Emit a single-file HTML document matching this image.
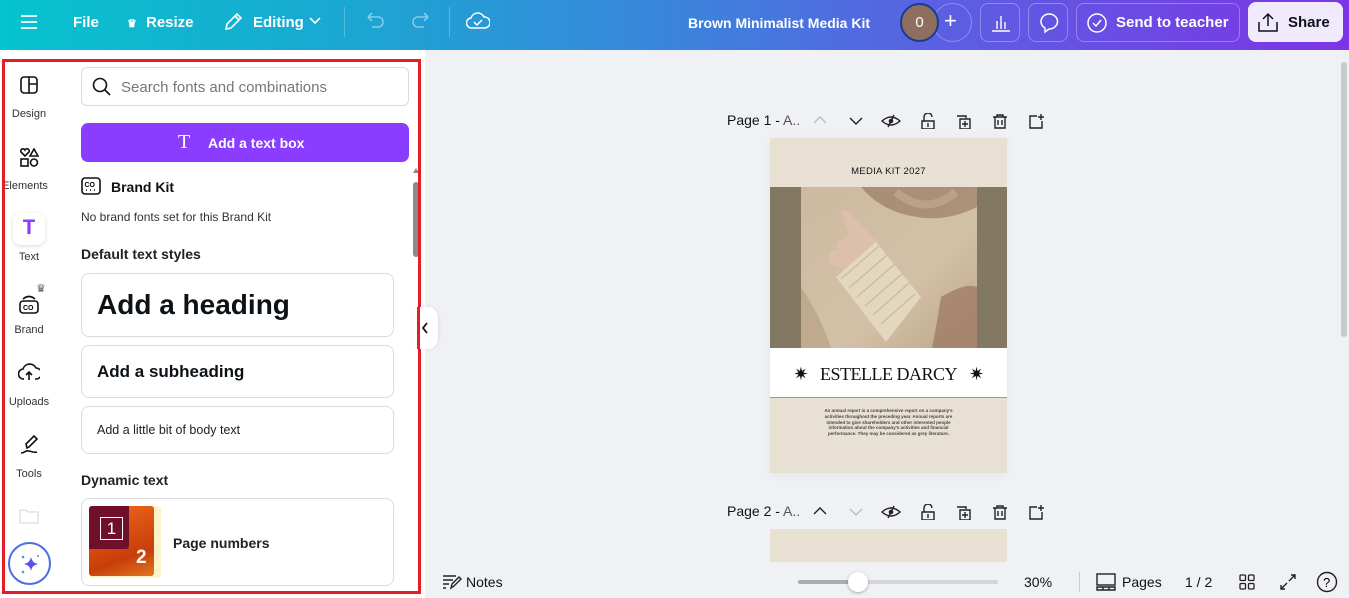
<!DOCTYPE html>
<html><head><meta charset="utf-8">
<style>
*{box-sizing:border-box;margin:0;padding:0}
body{width:1349px;height:598px;overflow:hidden;font-family:"Liberation Sans",sans-serif;background:#eff1f5;position:relative;color:#0d1216}
.top{position:absolute;left:0;top:0;width:1349px;height:50px;background:linear-gradient(90deg,#06c3cd 0%,#1aa8d2 25%,#3b84dc 50%,#5b5fe2 70%,#7d34e6 100%);color:#fff}
.top .t{position:absolute;top:14px;font-size:15px;font-weight:bold}
.sep{position:absolute;top:7px;width:1px;height:30px;background:rgba(255,255,255,.25)}
.tb{position:absolute;top:3px;height:39px;border:1px solid rgba(255,255,255,.3);border-radius:8px}
.panel{position:absolute;left:0;top:50px;width:425px;height:548px;background:#fff}
.red{position:absolute;left:2px;top:59px;width:419px;height:535px;border:3px solid #e81c25;pointer-events:none}
.nav{position:absolute;left:0;width:58px;text-align:center;font-size:11px;color:#333}
.card{position:absolute;left:81px;width:313px;border:1px solid #d9dbde;border-radius:8px;background:#fff}
.ic{stroke:#0d1216;fill:none;stroke-width:1.6}
.pgbar{position:absolute;left:727px;font-size:14px;color:#0d1216}
.pgbar span{color:#555}
</style></head><body>
<div class="top">
  <svg style="position:absolute;left:20px;top:14px" width="18" height="16"><path d="M1 2h16M1 8h16M1 14h16" stroke="#fff" stroke-width="1.8"/></svg>
  <div class="t" style="left:73px">File</div>
  <div class="t" style="left:127px;font-size:11px;top:17px">♛</div>
  <div class="t" style="left:146px">Resize</div>
  <svg style="position:absolute;left:223px;top:12px" width="20" height="20"><path d="M3 17l1-5L14 2l4 4L8 16zM12 4l4 4" stroke="#fff" stroke-width="1.6" fill="none"/></svg>
  <div class="t" style="left:253px">Editing</div>
  <svg style="position:absolute;left:309px;top:17px" width="12" height="8"><path d="M1 1l5 5 5-5" stroke="#fff" stroke-width="1.6" fill="none"/></svg>
  <div class="sep" style="left:344px"></div>
  <svg style="position:absolute;left:364px;top:12px" width="22" height="18"><path d="M4 5h10a5 5 0 010 10H8M4 5l4-4M4 5l4 4" stroke="rgba(255,255,255,.45)" stroke-width="1.6" fill="none"/></svg>
  <svg style="position:absolute;left:410px;top:12px" width="22" height="18"><path d="M18 5H8a5 5 0 000 10h6M18 5l-4-4M18 5l-4 4" stroke="rgba(255,255,255,.45)" stroke-width="1.6" fill="none"/></svg>
  <div class="sep" style="left:449px"></div>
  <svg style="position:absolute;left:466px;top:11px" width="24" height="20"><path d="M6 17a5 5 0 01-1-10 7 7 0 0113-1 5 5 0 011 11z M8 11l3 3 5-5" stroke="#fff" stroke-width="1.5" fill="none"/></svg>
  <div class="t" style="left:688px;font-size:14px;top:15px">Brown Minimalist Media Kit</div>
  <div style="position:absolute;left:933px;top:3px;width:39px;height:39px;border:1px solid rgba(255,255,255,.3);border-radius:50%"></div>
  <div style="position:absolute;left:900px;top:3px;width:39px;height:39px;border-radius:50%;background:#8e6f5f;border:2px solid #1b3c8c;text-align:center;line-height:35px;font-size:15px">0</div>
  <div class="t" style="left:944px;font-size:22px;top:8px;font-weight:normal">+</div>
  <div class="tb" style="left:980px;width:40px"><svg style="position:absolute;left:10px;top:9px" width="20" height="20"><path d="M1 18h18M6 16V8M10 16V3M14 16V9" stroke="#fff" stroke-width="1.4"/></svg></div>
  <div class="tb" style="left:1028px;width:40px"><svg style="position:absolute;left:9px;top:8px" width="22" height="22"><path d="M11 2a8.5 7.5 0 110 15l-4 3v-4a8 7.5 0 014-14z" stroke="#fff" stroke-width="1.5" fill="none"/></svg></div>
  <div class="tb" style="left:1076px;width:164px"><svg style="position:absolute;left:9px;top:8px" width="22" height="22"><circle cx="11" cy="11" r="9" stroke="#fff" stroke-width="1.5" fill="none"/><path d="M7 11l3 3 5-6" stroke="#fff" stroke-width="1.5" fill="none"/></svg><div class="t" style="left:39px;top:10px">Send to teacher</div></div>
  <div style="position:absolute;left:1248px;top:2px;width:95px;height:40px;border-radius:8px;background:#f1eafd;color:#0d1216"><svg style="position:absolute;left:10px;top:10px" width="20" height="20"><path d="M1 10v9h18v-9M10 14V2M5 7l5-5 5 5" stroke="#0d1216" stroke-width="1.5" fill="none"/></svg><div style="position:absolute;left:40px;top:12px;font-size:15px;font-weight:bold">Share</div></div>
</div>

<div class="panel"></div>
<!-- nav -->
<div class="nav" style="top:75px"><svg width="20" height="20"><rect x="2" y="2" width="16" height="16" rx="3" class="ic" stroke-width="1.4"/><path d="M10 2v16M10 9h8" class="ic" stroke-width="1.4"/></svg><div style="margin-top:10px">Design</div></div>
<div class="nav" style="top:148px"><svg width="20" height="20"><path d="M6 8l-4-4a2 2 0 014-2 2 2 0 014 2zM15 1l4 7h-8z" class="ic" stroke-width="1.3"/><rect x="2" y="11" width="7" height="7" class="ic" stroke-width="1.3"/><circle cx="15" cy="14.5" r="3.5" class="ic" stroke-width="1.3"/></svg><div style="margin-top:9px;margin-left:-8px">Elements</div></div>
<div style="position:absolute;left:13px;top:213px;width:32px;height:32px;border-radius:8px;background:#fff;box-shadow:0 1px 4px rgba(0,0,0,.15);color:#8b3dff;font-weight:bold;font-size:22px;text-align:center;line-height:32px;font-family:'Liberation Mono',monospace">T</div>
<div class="nav" style="top:251px">Text</div>
<div class="nav" style="top:285px"><span style="position:absolute;left:36px;top:-3px;font-size:11px;color:#555">♛</span><svg width="24" height="26" style="margin-top:8px"><rect x="3" y="8" width="18" height="12" rx="3" class="ic" stroke-width="1.3"/><text x="6" y="17" font-size="7" font-weight="bold" font-family="Liberation Sans">CO</text><path d="M6 6q6-5 12 0" class="ic" stroke-width="1.2"/></svg><div style="margin-top:2px">Brand</div></div>
<div class="nav" style="top:362px"><svg width="22" height="20"><path d="M6 17a5 5 0 01-1-10 7 7 0 0113-1 5 5 0 010 11h-1M11 18v-8M8 13l3-3 3 3" class="ic" stroke-width="1.3"/></svg><div style="margin-top:11px">Uploads</div></div>
<div class="nav" style="top:434px"><svg width="22" height="22"><path d="M9 14l-1-4 8-8 3 3-8 8zM3 19c4 0 4-3 8-2s6 2 8 1" class="ic" stroke-width="1.3"/></svg><div style="margin-top:9px">Tools</div></div>
<div class="nav" style="top:507px"><svg width="20" height="18"><path d="M1 3h6l2 2h10v11H1z" stroke="#ddd" fill="none" stroke-width="1.3"/></svg></div>
<div style="position:absolute;left:8px;top:542px;width:43px;height:43px;border-radius:50%;border:2px solid #4b6fe0;background:#fff"><svg style="position:absolute;left:9px;top:9px" width="22" height="22"><path d="M12 4q1 6 7 7q-6 1-7 7q-1-6-7-7q6-1 7-7z" fill="#5b4fe8"/><circle cx="4" cy="4" r="1.3" fill="#3aa0e0"/><circle cx="4" cy="19" r="1.3" fill="#3aa0e0"/><circle cx="19" cy="3" r="1" fill="#3aa0e0"/></svg></div>

<!-- panel content -->
<div class="card" style="top:67px;height:39px;width:328px;border-radius:6px"><svg style="position:absolute;left:10px;top:9px" width="20" height="20"><circle cx="8" cy="8" r="6.5" class="ic" stroke-width="1.8"/><path d="M13 13l5 5" class="ic" stroke-width="1.8"/></svg><div style="position:absolute;left:39px;top:11px;font-size:15px;color:#777">Search fonts and combinations</div></div>
<div style="position:absolute;left:81px;top:123px;width:328px;height:39px;border-radius:7px;background:#8b3dff;color:#fff"><div style="position:absolute;left:97px;top:8px;font-size:20px;font-family:'Liberation Serif',serif">T</div><div style="position:absolute;left:127px;top:12px;font-size:14px;font-weight:bold">Add a text box</div></div>
<svg style="position:absolute;left:81px;top:177px" width="20" height="19"><rect x="1" y="1" width="18" height="16" rx="3" class="ic" stroke-width="1.6"/><text x="3.5" y="10" font-size="7" font-weight="bold" font-family="Liberation Sans">CO</text><path d="M5 13h1M9 13h1M13 13h1" class="ic" stroke-width="1.8"/></svg>
<div style="position:absolute;left:111px;top:179px;font-size:14px;font-weight:bold">Brand Kit</div>
<div style="position:absolute;left:81px;top:210px;font-size:12px;color:#333">No brand fonts set for this Brand Kit</div>
<div style="position:absolute;left:81px;top:246px;font-size:14px;font-weight:bold;color:#222">Default text styles</div>
<div class="card" style="top:273px;height:64px"><div style="position:absolute;left:15px;top:15px;font-size:28px;font-weight:bold">Add a heading</div></div>
<div class="card" style="top:345px;height:53px"><div style="position:absolute;left:15px;top:16px;font-size:17px;font-weight:bold">Add a subheading</div></div>
<div class="card" style="top:406px;height:48px"><div style="position:absolute;left:15px;top:16px;font-size:12.5px;color:#222">Add a little bit of body text</div></div>
<div style="position:absolute;left:81px;top:472px;font-size:14px;font-weight:bold;color:#222">Dynamic text</div>
<div class="card" style="top:498px;height:88px">
  <div style="position:absolute;left:7px;top:7px;width:72px;height:72px;border-radius:3px;background:#fdf3c8"></div>
  <div style="position:absolute;left:7px;top:7px;width:65px;height:70px;border-radius:3px;background:linear-gradient(160deg,#f26a1b,#c73e0a 70%,#e0781e)"></div>
  <div style="position:absolute;left:7px;top:7px;width:40px;height:43px;background:#6f0f2a;border-radius:3px 0 3px 0"></div>
  <div style="position:absolute;left:18px;top:18px;width:23px;height:23px;border:1px solid #fff;color:#fff;font-size:17px;text-align:center;line-height:22px">1</div>
  <div style="position:absolute;left:54px;top:48px;color:#fff;font-size:19px;font-weight:bold">2</div>
  <div style="position:absolute;left:91px;top:36px;font-size:14px;font-weight:bold;color:#222">Page numbers</div>
</div>
<!-- scrollbar -->
<div style="position:absolute;left:413px;top:182px;width:6px;height:75px;border-radius:3px;background:#8a8a8a"></div>
<div style="position:absolute;left:413px;top:168px;width:0;height:0;border-left:3px solid transparent;border-right:3px solid transparent;border-bottom:5px solid #888"></div>
<div class="red"></div>
<div style="position:absolute;left:412px;top:307px;width:26px;height:42px;border-radius:0 10px 10px 0;background:#fff;box-shadow:1px 0 3px rgba(0,0,0,.08)"></div>
<div style="position:absolute;left:417px;top:307px;width:3px;height:42px;background:#e81c25"></div>
<svg style="position:absolute;left:421px;top:322px" width="8" height="12"><path d="M6 1L2 6l4 5" stroke="#111" stroke-width="1.8" fill="none"/></svg>

<!-- right scrollbar -->
<div style="position:absolute;left:1341px;top:62px;width:6px;height:275px;border-radius:3px;background:#c8cacd"></div>

<!-- page 1 bar -->
<div class="pgbar" style="top:112px">Page 1 - <span>A..</span></div>
<svg style="position:absolute;left:812px;top:113px" width="270" height="16">
 <path d="M2 10l6-6 6 6" stroke="#bbb" stroke-width="1.4" fill="none"/>
 <path d="M38 5l6 6 6-6" stroke="#222" stroke-width="1.4" fill="none"/>
 <path d="M70 8q9-8 18 0q-9 8-18 0zM82 2l-6 12" stroke="#222" stroke-width="1.4" fill="none"/><circle cx="79" cy="8" r="2.3" fill="#222"/>
 <path d="M110 8h12v8h-12zM112 8V4a4 4 0 018 0M116 10v4" stroke="#222" stroke-width="1.4" fill="none"/>
 <path d="M145 3h9v2M148 6h10v10h-10zM153 8v6M150 11h6" stroke="#222" stroke-width="1.4" fill="none"/>
 <path d="M181 4h14M185 4V2h6v2M183 4v11h10V4M186 7v5M190 7v5" stroke="#222" stroke-width="1.4" fill="none"/>
 <path d="M225 3h-7v12h12V8M226 4h6M229 1v6" stroke="#222" stroke-width="1.4" fill="none"/>
</svg>

<!-- page 1 -->
<div style="position:absolute;left:770px;top:138px;width:237px;height:335px;background:#e8e1d3;box-shadow:0 2px 10px rgba(0,0,0,.05);overflow:hidden">
  <div style="position:absolute;left:0;top:28px;width:237px;text-align:center;font-size:9.5px;letter-spacing:.3px">MEDIA KIT 2027</div>
  <div style="position:absolute;left:0;top:49px;width:237px;height:161px;background:#837862"></div>
  <svg style="position:absolute;left:31px;top:49px" width="176" height="161">
    <defs><linearGradient id="bg" x1="0" y1="0" x2="1" y2="1"><stop offset="0" stop-color="#cdb99f"/><stop offset=".6" stop-color="#d3c1a7"/><stop offset="1" stop-color="#bca68a"/></linearGradient></defs>
    <rect width="176" height="161" fill="url(#bg)"/>
    <path d="M60 0h116v20q-30 15-60 10q-35-5-56-30z" fill="#8a6a55" opacity=".55"/>
    <path d="M95 5q30 25 60 0" stroke="#b9a285" stroke-width="8" fill="none"/>
    <path d="M40 25q5-5 12 5l22 22q6 4 4 8l-20 15q-15 8-25 4q-8-3-5-12q2-5 10-4q-6-6 2-10l8-4z" fill="#dcc0ac"/>
    <path d="M35 90l40-35 45 55-35 45z" fill="#e3d7c0"/>
    <path d="M40 92l38-33M48 101l38-33M56 110l38-33M64 119l38-33M72 128l36-32M80 137l34-30" stroke="#c9b99e" stroke-width="1.2"/>
    <path d="M140 110q25-15 36-10v61h-45q5-25 9-51z" fill="#9b7560" opacity=".7"/>
    <path d="M0 100q20 30 30 61H0z" fill="#b39c80" opacity=".6"/>
  </svg>
  <div style="position:absolute;left:0;top:210px;width:237px;height:50px;background:#fff;border-bottom:1px solid #999"></div>
  <div style="position:absolute;left:0;top:226px;width:237px;text-align:center;font-family:'Liberation Serif',serif;font-size:18px;letter-spacing:-.5px">✷&nbsp;&nbsp;&nbsp;ESTELLE DARCY&nbsp;&nbsp;&nbsp;✷</div>
  <div style="position:absolute;left:45px;top:270px;width:147px;text-align:center;font-size:4.5px;line-height:5.8px;color:#444;font-weight:bold">An annual report is a comprehensive report on a company's activities throughout the preceding year. Annual reports are intended to give shareholders and other interested people information about the company's activities and financial performance. They may be considered as grey literature.</div>
</div>

<!-- page 2 -->
<div class="pgbar" style="top:503px">Page 2 - <span>A..</span></div>
<svg style="position:absolute;left:812px;top:504px" width="270" height="16">
 <path d="M2 10l6-6 6 6" stroke="#222" stroke-width="1.4" fill="none"/>
 <path d="M38 5l6 6 6-6" stroke="#bbb" stroke-width="1.4" fill="none"/>
 <path d="M70 8q9-8 18 0q-9 8-18 0zM82 2l-6 12" stroke="#222" stroke-width="1.4" fill="none"/><circle cx="79" cy="8" r="2.3" fill="#222"/>
 <path d="M110 8h12v8h-12zM112 8V4a4 4 0 018 0M116 10v4" stroke="#222" stroke-width="1.4" fill="none"/>
 <path d="M145 3h9v2M148 6h10v10h-10zM153 8v6M150 11h6" stroke="#222" stroke-width="1.4" fill="none"/>
 <path d="M181 4h14M185 4V2h6v2M183 4v11h10V4M186 7v5M190 7v5" stroke="#222" stroke-width="1.4" fill="none"/>
 <path d="M225 3h-7v12h12V8M226 4h6M229 1v6" stroke="#222" stroke-width="1.4" fill="none"/>
</svg>
<div style="position:absolute;left:770px;top:529px;width:237px;height:33px;background:#e8e1d3"></div>

<!-- bottom bar -->
<div style="position:absolute;left:425px;top:562px;width:924px;height:36px;background:#eff1f5"></div>
<svg style="position:absolute;left:442px;top:574px" width="20" height="16"><path d="M1 2h13M1 6h10M1 10h6M1 14h3M9 14l1-4 7-7 2 2-7 7z" stroke="#222" stroke-width="1.4" fill="none"/></svg>
<div style="position:absolute;left:466px;top:574px;font-size:14px">Notes</div>
<div style="position:absolute;left:798px;top:580px;width:200px;height:4px;border-radius:2px;background:#d3d5d9"></div>
<div style="position:absolute;left:798px;top:580px;width:60px;height:4px;border-radius:2px;background:#a8acb3"></div>
<div style="position:absolute;left:848px;top:572px;width:20px;height:20px;border-radius:50%;background:#fff;box-shadow:0 1px 3px rgba(0,0,0,.3)"></div>
<div style="position:absolute;left:1024px;top:574px;font-size:14px">30%</div>
<div style="position:absolute;left:1079px;top:572px;width:1px;height:20px;background:#ccc"></div>
<svg style="position:absolute;left:1096px;top:573px" width="20" height="18"><rect x="1" y="1" width="18" height="11" stroke="#222" stroke-width="1.4" fill="none"/><path d="M1 14h18v3H1zM7 14v3M13 14v3" stroke="#222" stroke-width="1.4" fill="none"/></svg>
<div style="position:absolute;left:1122px;top:574px;font-size:14px">Pages</div>
<div style="position:absolute;left:1185px;top:574px;font-size:14px">1 / 2</div>
<svg style="position:absolute;left:1239px;top:574px" width="16" height="16"><rect x="1" y="1" width="5.5" height="5.5" rx="1" stroke="#222" stroke-width="1.3" fill="none"/><rect x="9.5" y="1" width="5.5" height="5.5" rx="1" stroke="#222" stroke-width="1.3" fill="none"/><rect x="1" y="9.5" width="5.5" height="5.5" rx="1" stroke="#222" stroke-width="1.3" fill="none"/><rect x="9.5" y="9.5" width="5.5" height="5.5" rx="1" stroke="#222" stroke-width="1.3" fill="none"/></svg>
<svg style="position:absolute;left:1279px;top:573px" width="18" height="18"><path d="M10 8l6-6M12 2h4v4M8 10l-6 6M2 12v4h4" stroke="#222" stroke-width="1.4" fill="none"/></svg>
<svg style="position:absolute;left:1316px;top:571px" width="22" height="22"><circle cx="11" cy="11" r="9.5" stroke="#222" stroke-width="1.4" fill="none"/><text x="7" y="16" font-size="13" font-family="Liberation Sans">?</text></svg>
</body></html>
